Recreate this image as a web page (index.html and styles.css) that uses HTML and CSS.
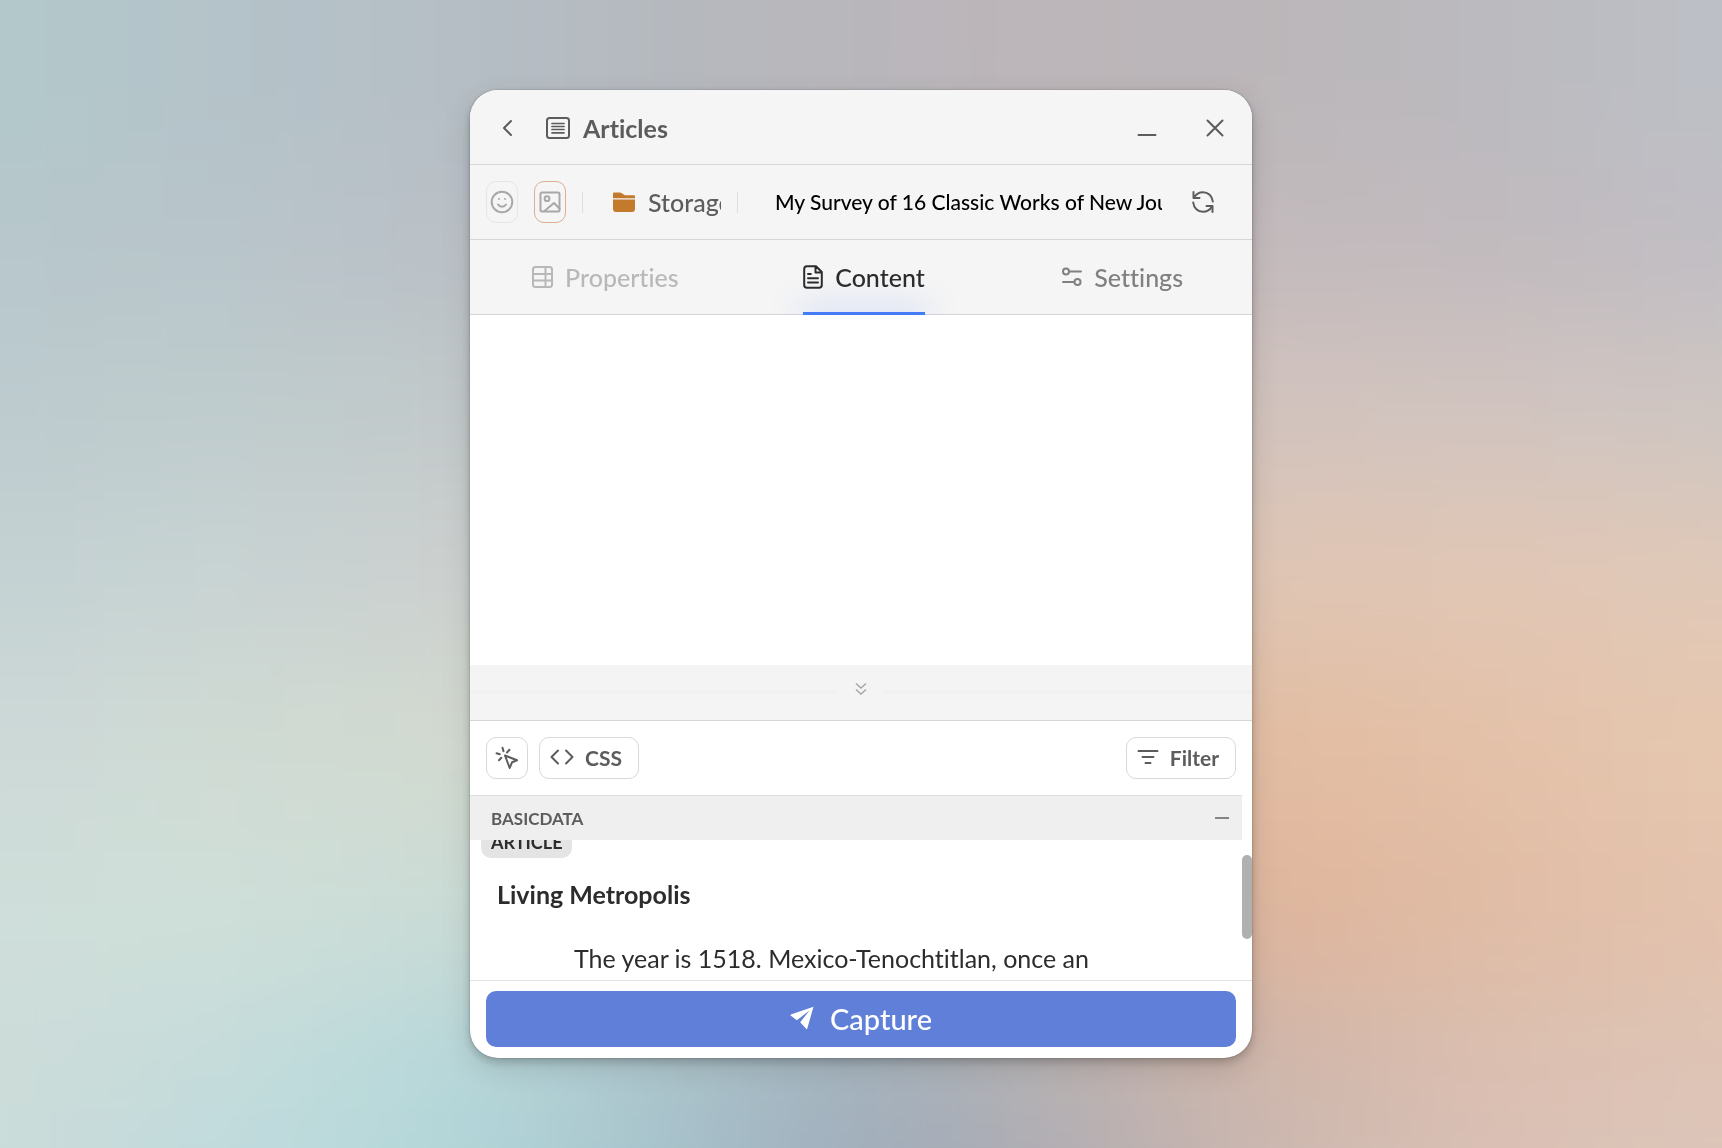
FILE: index.html
```html
<!DOCTYPE html>
<html lang="en">
<head>
<meta charset="utf-8">
<meta name="viewport" content="width=device-width, initial-scale=1">
<title>Articles – Capture</title>
<link rel="stylesheet" href="styles.css">
</head>
<body>
<div class="backdrop" aria-hidden="true">
  <div class="wash">
    <div class="band band-1"></div>
    <div class="band band-2"></div>
    <div class="band band-3"></div>
    <div class="band band-4"></div>
    <div class="band band-5"></div>
    <div class="band band-6"></div>
    <div class="band band-7"></div>
    <div class="band band-8"></div>
  </div>
</div>

<main class="window">
  <header class="titlebar">
    <button class="icon-button" type="button" aria-label="Back">
      <svg width="12" height="18" viewBox="0 0 12 18" class="stroke"><path d="M10 2 3 9l7 7"/></svg>
    </button>
    <h1 class="title">
      <svg width="24" height="24" viewBox="0 0 24 24" class="stroke"><rect x="1" y="2" width="22" height="20" rx="2.5"/><path d="M6 7.500h12M6 10.500h12M6 13.500h12M6 16.800h12" stroke-width="1.700"/></svg>
      <span>Articles</span>
    </h1>
    <div class="window-controls">
      <button class="icon-button" type="button" aria-label="Minimize">
        <svg width="20" height="20" viewBox="0 0 20 20" class="stroke"><path d="M1.500 17h17"/></svg>
      </button>
      <button class="icon-button" type="button" aria-label="Close">
        <svg width="20" height="20" viewBox="0 0 20 20" class="stroke"><path d="M2.500 2.500l15 15M17.500 2.500l-15 15"/></svg>
      </button>
    </div>
  </header>

  <div class="document-bar">
    <button class="chip" type="button" aria-label="Add emoji">
      <svg width="24" height="24" viewBox="0 0 24 24" class="stroke"><circle cx="12" cy="12" r="10.300"/><path d="M8 14.500c1 1.500 2.400 2.200 4 2.200s3-.7 4-2.200M9 9v.1M15 9v.1"/></svg>
    </button>
    <button class="chip chip-accent" type="button" aria-label="Choose cover image">
      <svg width="24" height="24" viewBox="0 0 24 24" class="stroke"><rect x="2.500" y="2.500" width="19" height="19" rx="1.500"/><circle cx="9" cy="8.700" r="2.400"/><path d="M6.500 21 16 13l5.500 5.500"/></svg>
    </button>
    <span class="divider"></span>
    <button class="folder" type="button">
      <svg width="22" height="20" viewBox="0 0 22 20"><path fill="#c47a2c" d="M0 1.500Q0 .5 1 .5h6.500L12 3.200h9q1 0 1 1v2H0zM0 7.500h22V17q0 3-3 3H3q-3 0-3-3z"/></svg>
      <span>Storage</span>
    </button>
    <span class="divider"></span>
    <input class="document-title" type="text" aria-label="Title" value="My Survey of 16 Classic Works of New Journalism">
    <button class="icon-button" type="button" aria-label="Refresh">
      <svg width="24" height="24" viewBox="0 0 24 24" class="stroke"><path d="M2.500 2v6h6M21.500 22v-6h-6"/><path d="M3 7.500C5 4 8.200 2.200 12 2.200c5.200 0 9.200 3.800 9.800 9.300M21 16.500c-2 3.500-5.200 5.300-9 5.300-5.200 0-9.200-3.800-9.800-9.300"/></svg>
    </button>
  </div>

  <nav class="tabs">
    <button class="tab tab-disabled" type="button" disabled>
      <svg width="21" height="22" viewBox="0 0 21 22" class="stroke"><rect x="1" y="1" width="19" height="20" rx="2.500"/><path d="M1 8h19M1 14.500h19M13.500 1v20"/></svg>
      <span>Properties</span>
    </button>
    <button class="tab tab-active" type="button" aria-current="page">
      <svg width="20" height="24" viewBox="0 0 20 24" class="stroke"><path d="M13 1.200H4Q1.200 1.200 1.200 4v16q0 2.800 2.800 2.800h12q2.800 0 2.800-2.800V7zM12.500 1.500V7.500h6M5 9h2.800M5 13.200h10M5 17.500h10"/></svg>
      <span>Content</span>
    </button>
    <button class="tab" type="button">
      <svg width="20" height="20" viewBox="0 0 20 20" class="stroke"><circle cx="4" cy="4.500" r="3"/><circle cx="15.500" cy="15" r="3"/><path d="M7.500 4.500H19M1 15h11"/></svg>
      <span>Settings</span>
    </button>
  </nav>

  <section class="preview" aria-label="Preview"></section>

  <div class="splitter">
    <span class="splitter-line"></span>
    <button class="splitter-toggle" type="button" aria-label="Collapse preview">
      <svg width="12" height="14" viewBox="0 0 12 14"><path d="M1 1.500l5 4.500 5-4.500M1 7.500 6 12l5-4.500"/></svg>
    </button>
    <span class="splitter-line"></span>
  </div>

  <div class="toolbar">
    <button class="tool tool-square" type="button" aria-label="Pick element">
      <svg width="24" height="24" viewBox="0 0 24 24" class="stroke"><path d="M10 9.500l12 4.800-5 2L14.700 22z"/><path d="M7.500 1.800l1 3.500M14.500 3.800l-2.500 2.700M1.500 7.200l3.300 1M6.300 11.800l-2.300 2.500"/></svg>
    </button>
    <button class="tool" type="button">
      <svg width="24" height="18" viewBox="0 0 24 18" class="stroke"><path d="M8 2.500 1.500 9 8 15.500M16 2.500 22.500 9 16 15.500"/></svg>
      <span>CSS</span>
    </button>
    <button class="tool tool-filter" type="button">
      <svg width="22" height="18" viewBox="0 0 22 18" class="stroke"><path d="M1.500 3h19M5.500 9h11M8.500 15h5"/></svg>
      <span>Filter</span>
    </button>
  </div>

  <section class="data">
    <div class="data-header">
      <h2 class="data-title">BASICDATA</h2>
      <button class="data-collapse" type="button" aria-label="Collapse BASICDATA">
        <svg width="16" height="4" viewBox="0 0 16 4"><path d="M1 2h14"/></svg>
      </button>
    </div>
    <div class="data-body">
      <div class="data-scroll">
        <span class="tag">ARTICLE</span>
        <h3 class="article-heading">Living Metropolis</h3>
        <p class="article-text">The year is 1518. Mexico-Tenochtitlan, once an</p>
      </div>
    </div>
    <span class="scroll-thumb" aria-hidden="true"></span>
  </section>

  <footer class="footer">
    <button class="capture" type="button">
      <svg width="24" height="24" viewBox="0 0 24 24"><path fill="#fff" d="M23.500.8.800 8.600q-.6.300-.2.900l6.200 4.700L19.500 4.500 10.200 16.200l6.200 6.800q.6.400.8-.3z"/></svg>
      <span>Capture</span>
    </button>
  </footer>
</main>
</body>
</html>
```
FILE: styles.css
```css
* {
  box-sizing: border-box;
}

body {
  margin: 0;
  min-height: 100vh;
  display: grid;
  place-items: center;
  background: #c8c8c6;
  color: #5c5c5c;
  font-family: Lato, "Liberation Sans", sans-serif;
  font-size: 25px;
  font-weight: 500;
  font-variant-ligatures: none;
}

button,
input {
  margin: 0;
  padding: 0;
  border: 0;
  background: none;
  color: inherit;
  font: inherit;
  font-variant-ligatures: none;
}

h1,
h2,
h3,
p {
  margin: 0;
  font: inherit;
  font-variant-ligatures: none;
}

svg {
  display: block;
  flex: none;
}

.stroke {
  fill: none;
  stroke: currentColor;
  stroke-width: 2;
  stroke-linecap: round;
  stroke-linejoin: round;
}

/* Soft colour wash behind the window */
.backdrop {
  position: fixed;
  inset: 0;
  overflow: hidden;
}

.wash {
  position: absolute;
  inset: -200px;
  display: flex;
  flex-direction: column;
  filter: blur(60px);
}

.band {
  flex: 164 0 0;
}

.band-1 {
  flex-grow: 364;
  background: linear-gradient(90deg, #b2c9cb 9%, #b4c3c9 20%, #b5bec5 31%, #b5b8bd 43%, #bcb5ba 56%, #bbb6b8 68%, #bbbabf 80%, #bcc0c6 91%);
}

.band-2 {
  background: linear-gradient(90deg, #b7c7cb 9%, #b8c5cb 20%, #bac0c6 31%, #bebcc0 50%, #c3babc 68%, #c1babe 80%, #c1bec4 91%);
}

.band-3 {
  background: linear-gradient(90deg, #bdcbcf 9%, #bfcccd 20%, #c2c9ca 31%, #cbc3c0 50%, #d2c3bd 68%, #d1c4c0 80%, #cec6c2 91%);
}

.band-4 {
  background: linear-gradient(90deg, #c4d2d3 9%, #c8d3d3 20%, #ccd0cf 31%, #d4cac0 50%, #dfc5b3 68%, #e1c7b5 80%, #e0c8b8 91%);
}

.band-5 {
  background: linear-gradient(90deg, #ccd9d8 9%, #d0dad3 20%, #d2dad0 31%, #d6c8b8 50%, #e2bca1 68%, #e4c1a9 80%, #e6c8b0 91%);
}

.band-6 {
  background: linear-gradient(90deg, #cfdeda 9%, #cfdfd8 20%, #cbdcd6 31%, #c0c4c0 50%, #e0b49b 68%, #e0bca5 80%, #e4c3ae 91%);
}

.band-7 {
  flex-grow: 116;
  background: linear-gradient(90deg, #cddcd9 9%, #c6dcdb 20%, #b7d8db 31%, #a2b2be 50%, #ceb4a8 68%, #dbbfb0 80%, #dec4b5 91%);
}

.band-8 {
  flex-grow: 248;
  background: linear-gradient(90deg, #cbdcd8 9%, #c0dadd 20%, #b7dada 27%, #add0d5 35%, #a4bcc6 43%, #a0adbb 50%, #a8abb5 56%, #bfb1b1 64%, #cbb8b0 69%, #dbc0b5 80%, #dcc6ba 91%);
}

/* Window */
.window {
  position: relative;
  width: 782px;
  max-width: 100%;
  display: flex;
  flex-direction: column;
  overflow: hidden;
  border-radius: 28px;
  background: #fff;
  box-shadow: 0 0 2px rgba(0, 0, 0, 0.3), 0 4px 10px rgba(0, 0, 0, 0.2), 0 10px 30px rgba(0, 0, 0, 0.12);
}

.titlebar,
.document-bar,
.tabs {
  height: 75px;
  background: #f5f5f5;
  border-bottom: 1px solid #d6d6d6;
}

.icon-button {
  width: 42px;
  height: 42px;
  flex: none;
  display: grid;
  place-items: center;
}

.titlebar {
  display: flex;
  align-items: center;
  padding: 2px 16px 0;
  gap: 18px;
}

.title {
  display: flex;
  align-items: center;
  gap: 13px;
  font-weight: 700;
}

.window-controls {
  margin-left: auto;
  display: flex;
  gap: 26px;
}

/* Document bar */
.document-bar {
  display: flex;
  align-items: center;
  gap: 16px;
  padding: 0 28px 0 16px;
}

.chip {
  width: 32px;
  height: 42px;
  flex: none;
  display: grid;
  place-items: center;
  border: 1px solid #e6e6e6;
  border-radius: 10px;
  color: #a8a8a8;
}

.chip-accent {
  border-color: #dcae93;
}

.divider {
  width: 1px;
  height: 21px;
  flex: none;
  background: #dedede;
}

.folder {
  width: 122px;
  flex: none;
  display: flex;
  align-items: center;
  gap: 13px;
  padding-left: 14px;
  overflow: hidden;
}

.document-title {
  flex: 1;
  min-width: 0;
  height: 42px;
  margin: 0 4px 0 21px;
  padding-bottom: 2px;
  color: #000;
  font-size: 21px;
}

/* Tabs */
.tabs {
  display: grid;
  grid-template-columns: repeat(3, 1fr);
  justify-items: center;
  padding-left: 6px;
  overflow: hidden;
  border-bottom: 0;
  box-shadow: inset 0 -1px #d6d6d6;
}

.tab {
  position: relative;
  height: 75px;
  display: flex;
  align-items: center;
  gap: 12px;
  padding-bottom: 2px;
  color: #808080;
}

.tab-disabled {
  color: #b8b8b8;
}

.tab-active {
  color: #2c2c2c;
}

.tab-active::after {
  content: "";
  position: absolute;
  left: 0;
  right: 0;
  bottom: 0;
  height: 3px;
  background: #447bf8;
  box-shadow: 0 0 32px 4px rgba(68, 123, 248, 0.3);
}

.preview {
  height: 350px;
}

/* Splitter */
.splitter {
  height: 56px;
  display: flex;
  align-items: center;
  padding-bottom: 2px;
  background: #f4f4f4;
  border-bottom: 1px solid #d6d6d6;
}

.splitter-line {
  flex: 1;
  height: 4px;
  background: #f1f1f1;
}

.splitter-toggle {
  width: 48px;
  height: 42px;
  display: grid;
  justify-items: center;
  align-content: center;
  padding-bottom: 6px;
}

.splitter-toggle path {
  fill: none;
  stroke: #a6a6a6;
  stroke-width: 1.5;
}

/* Toolbar */
.toolbar {
  display: flex;
  gap: 11px;
  padding: 16px;
}

.tool {
  height: 42px;
  display: flex;
  align-items: center;
  gap: 11px;
  padding: 0 16px 2px 10px;
  border: 1px solid #d9d9d9;
  border-radius: 10px;
  font-size: 21px;
  font-weight: 700;
}

.tool-square {
  width: 42px;
  justify-content: center;
  padding: 0;
}

.tool-filter {
  margin-left: auto;
}

/* Data section */
.data {
  position: relative;
  padding-right: 10px;
}

.data-header {
  height: 45px;
  display: flex;
  align-items: center;
  justify-content: space-between;
  padding: 0 12px 0 21px;
  background: #efefef;
  border-top: 1px solid #dfdfdf;
}

.data-title {
  font-size: 17px;
  font-weight: 700;
}

.data-collapse path {
  stroke: #858585;
  stroke-width: 2;
}

.data-body {
  height: 140px;
  overflow: hidden;
}

/* Scrolled so that the tag is half under the section header */
.data-scroll {
  display: flex;
  flex-direction: column;
  align-items: flex-start;
  margin-top: -14px;
  padding: 0 11px;
  color: #2c2c2c;
}

.tag {
  padding: 0 10px;
  border-radius: 10px;
  background: #e4e4e4;
  font-size: 18px;
  font-weight: 700;
  line-height: 32px;
}

.article-heading {
  margin: 20px 16px 0;
  font-weight: 700;
  line-height: 32px;
}

.article-text {
  margin: 32px 93px 0;
  font-weight: 400;
  line-height: 32px;
}

.scroll-thumb {
  position: absolute;
  top: 60px;
  right: 0;
  width: 10px;
  height: 84px;
  border-radius: 5px;
  background: #b0b0b0;
}

/* Footer */
.footer {
  padding: 10px 16px 11px;
  border-top: 1px solid #e2e2e2;
}

.capture {
  width: 100%;
  height: 56px;
  display: flex;
  align-items: center;
  justify-content: center;
  gap: 16px;
  padding-bottom: 2px;
  border-radius: 10px;
  background: #607fd9;
  color: #fff;
  font-size: 29px;
}
```
